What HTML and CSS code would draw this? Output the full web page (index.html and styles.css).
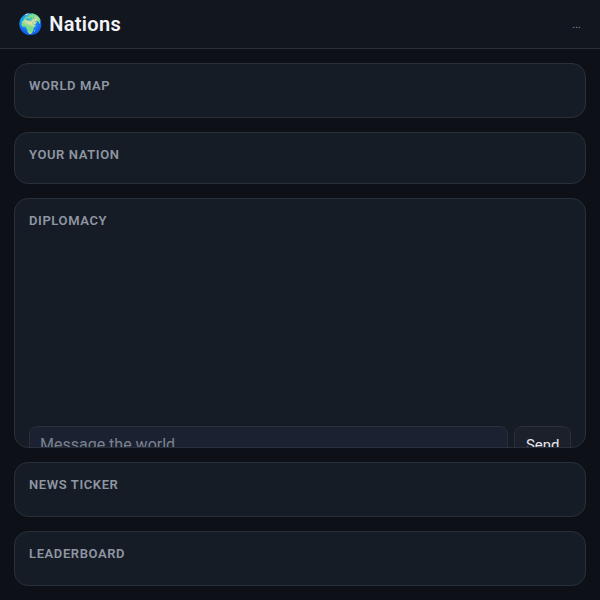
FILE: index.html
```html
<!DOCTYPE html>
<html lang="en">
<head>
<meta charset="utf-8">
<title>Nations</title>
<link rel="stylesheet" href="styles.css">
</head>
<body>
<header class="topbar">
  <h1 class="brand"><span class="globe">🌍</span><span>Nations</span></h1>
  <span class="status">...</span>
</header>
<main class="stack">
  <section class="card card-map"><h2 class="label">World Map</h2></section>
  <section class="card card-nation"><h2 class="label">Your Nation</h2></section>
  <section class="card card-diplomacy">
    <h2 class="label">Diplomacy</h2>
    <div class="messages"></div>
    <form class="composer">
      <input class="field" type="text" placeholder="Message the world">
      <button class="send" type="button">Send</button>
    </form>
  </section>
  <section class="card card-news"><h2 class="label">News Ticker</h2></section>
  <section class="card card-board"><h2 class="label">Leaderboard</h2></section>
</main>
</body>
</html>
```
FILE: styles.css
```css
* { box-sizing: border-box; }
html, body { margin: 0; height: 100%; }
body {
  background: #0d1016;
  color: #e6e8ee;
  font-family: Roboto, "Noto Sans", sans-serif;
  overflow: hidden;
}
.topbar {
  height: 49px;
  padding: 0 18px;
  display: flex;
  align-items: center;
  justify-content: space-between;
  background: #12161e;
  border-bottom: 1px solid #2a2f3a;
}
.brand {
  margin: 0;
  display: flex;
  align-items: center;
  gap: 6px;
  font-size: 20px;
  font-weight: 600;
  letter-spacing: 0.3px;
  color: #f2f4f8;
}
.status { font-size: 11px; color: #8b93a3; margin-right: 1px; }
.stack {
  display: flex;
  flex-direction: column;
  gap: 14px;
  padding: 14px;
}
.card {
  background: #161c25;
  border: 1px solid #2a3039;
  border-radius: 14px;
  padding: 14px;
  overflow: hidden;
}
.card-map, .card-news, .card-board { height: 55px; }
.card-nation { height: 52px; }
.card-diplomacy { height: 250px; display: flex; flex-direction: column; }
.label {
  margin: 0;
  font-size: 13px;
  line-height: 15px;
  font-weight: 600;
  letter-spacing: 0.6px;
  text-transform: uppercase;
  color: #8f96a3;
}
.messages { height: 198px; flex: none; }
.composer { display: flex; gap: 6px; flex: none; }
.field {
  flex: 1;
  min-width: 0;
  height: 37px;
  padding: 0 10px;
  background: #1b2130;
  border: 1px solid #2a3039;
  border-radius: 8px;
  font: 16px Roboto, sans-serif;
  color: #e6e8ee;
}
.field::placeholder { color: #7b8291; }
.send {
  height: 37px;
  padding: 0 10.5px;
  background: #1b202b;
  border: 1px solid #2a3039;
  border-radius: 8px;
  font: 15px Roboto, sans-serif;
  color: #e6e8ee;
}
```
